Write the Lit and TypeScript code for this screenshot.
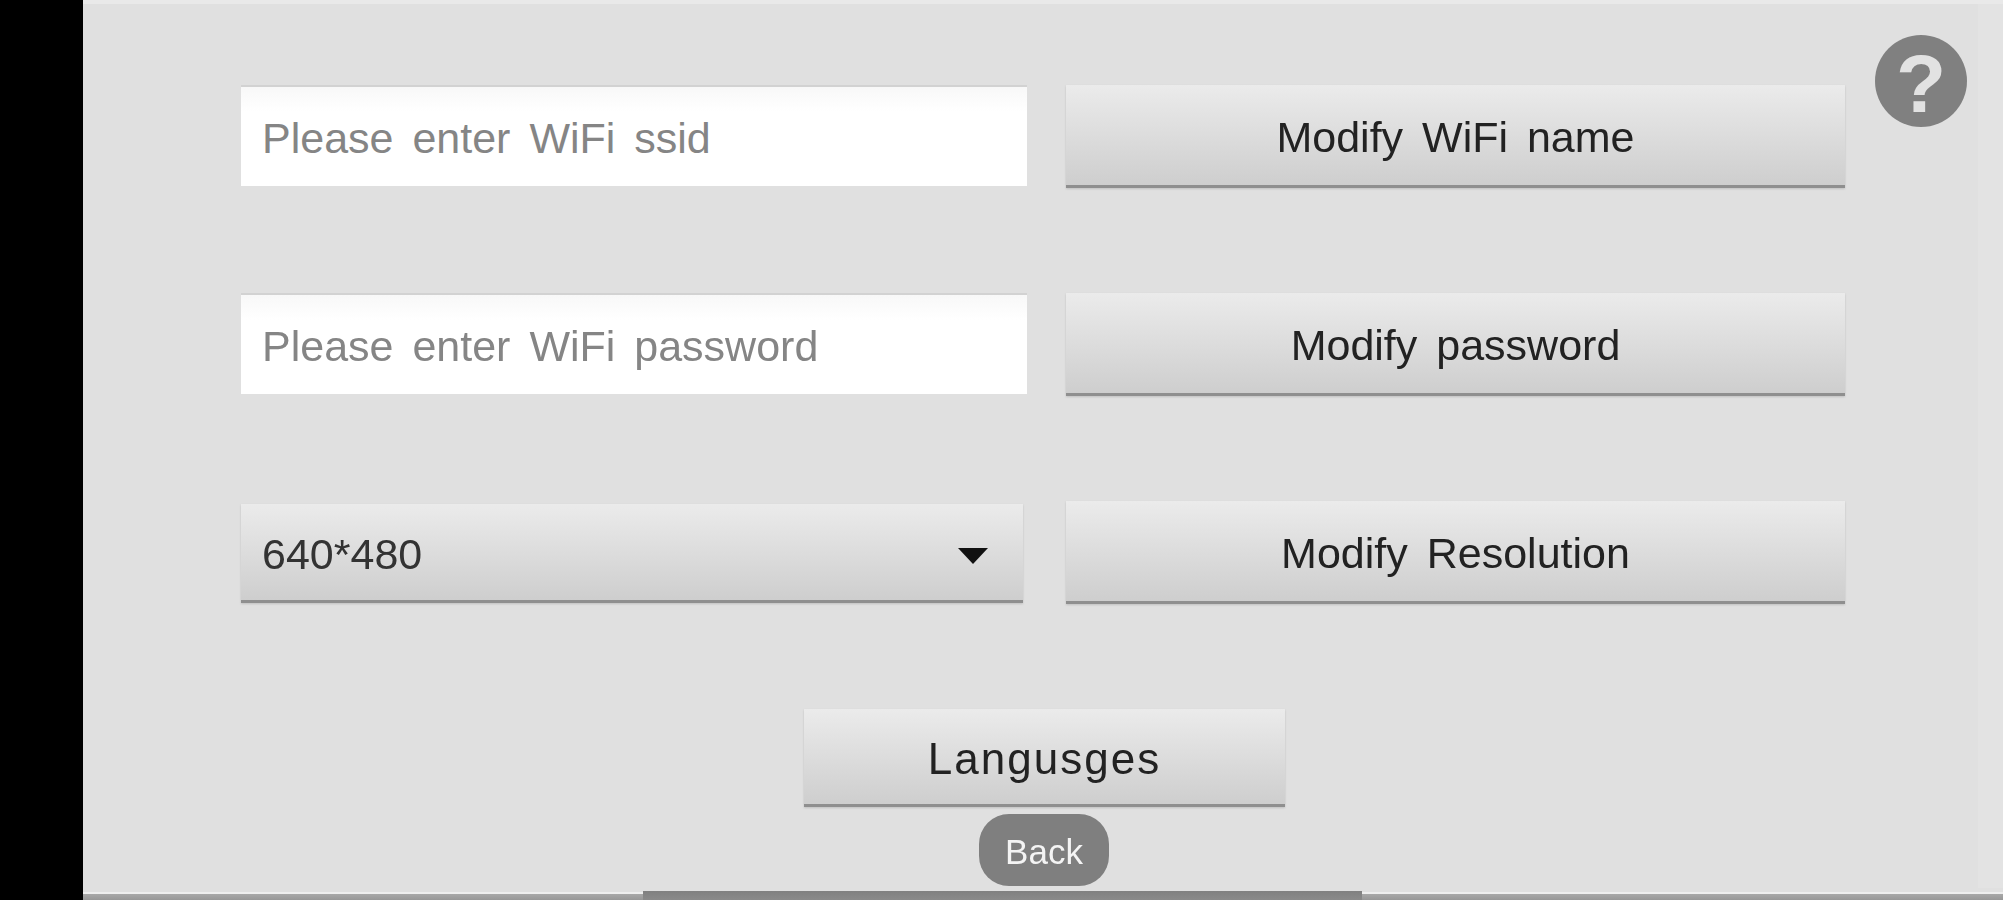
import {LitElement, css, html} from 'lit';
import {customElement} from 'lit/decorators.js';

@customElement('app-root')
export class AppRoot extends LitElement {
  static styles = css`
    :host {
      display: flex;
      width: 2003px;
      height: 900px;
      background: #000;
      font-family: 'Liberation Sans', Arial, sans-serif;
      overflow: hidden;
    }
    .panel {
      position: relative;
      flex: 1;
      margin-left: 83px;
      display: flex;
      flex-direction: column;
      background: linear-gradient(to right, #e0e0e0 1895px, #e3e3e3 1895px);
      border-top: 4px solid #e9e9e9;
    }
    .form {
      flex: 1;
      display: grid;
      grid-template-columns: 786px 779px;
      grid-auto-rows: 103px;
      column-gap: 39px;
      row-gap: 105px;
      padding: 81px 0 0 158px;
      filter: blur(0.6px);
    }
    .field {
      width: 100%;
      height: 101px;
      box-sizing: border-box;
      margin: 0;
      padding: 3px 21px 0;
      border: 0;
      border-top: 2px solid #d2d2d2;
      border-radius: 0;
      outline: none;
      background: linear-gradient(#f8f8f8, #fff 25%);
      font: inherit;
      font-size: 43px;
      word-spacing: 7px;
      color: #808080;
    }
    .field::placeholder {
      color: #858585;
      opacity: 1;
    }
    .btn {
      margin: 0;
      padding: 5px 0 0;
      border: 0;
      border-bottom: 3px solid #8f8f8f;
      background: linear-gradient(#ebebeb, #cecece);
      font: inherit;
      font-size: 43px;
      word-spacing: 7px;
      color: #222;
      box-shadow: 0 1px 2px rgba(0, 0, 0, 0.15);
    }
    .select {
      display: flex;
      align-items: center;
      justify-content: space-between;
      width: 782px;
      height: 99px;
      margin-top: 3px;
      padding: 5px 35px 0 21px;
      box-sizing: border-box;
      text-align: left;
      color: #333;
    }
    .caret {
      width: 0;
      height: 0;
      margin-top: 2px;
      border-left: 15px solid transparent;
      border-right: 15px solid transparent;
      border-top: 16px solid #111;
    }
    .lang-row {
      grid-column: 1 / -1;
      display: flex;
      justify-content: flex-start;
      padding-left: 563px;
    }
    .lang {
      width: 481px;
      height: 98px;
      font-size: 44px;
      letter-spacing: 2px;
    }
    .back-row {
      display: flex;
      justify-content: flex-start;
      padding-left: 896px;
      margin-bottom: 2px;
      filter: blur(0.6px);
    }
    .back {
      width: 130px;
      height: 72px;
      padding: 4px 0 0;
      border: 0;
      border-radius: 30px;
      background: #7f7f7f;
      color: #f4f4f4;
      font: inherit;
      font-size: 35px;
    }
    .bar {
      display: flex;
      height: 12px;
      background: linear-gradient(#e0e0e0 4px, #eeeeee 4px, #eeeeee 6px, #a8a8a8 6px, #979797);
    }
    .bar i {
      display: block;
      width: 719px;
      margin: 3px 0 0 560px;
      background: linear-gradient(#808080, #8a8a8a);
    }
    .help {
      position: absolute;
      top: 31px;
      right: 36px;
      width: 92px;
      height: 92px;
      padding: 0;
      border: 0;
      border-radius: 50%;
      background: #808080;
      color: #e2e2e2;
      font: inherit;
      font-size: 82px;
      font-weight: 700;
      line-height: 98px;
      filter: blur(0.6px);
    }
  `;

  render() {
    return html`
      <div class="panel">
        <button class="help">?</button>
        <div class="form">
          <input class="field" placeholder="Please enter WiFi ssid" />
          <button class="btn">Modify WiFi name</button>
          <input class="field" placeholder="Please enter WiFi password" />
          <button class="btn">Modify password</button>
          <button class="btn select">
            <span>640*480</span>
            <span class="caret"></span>
          </button>
          <button class="btn">Modify Resolution</button>
          <div class="lang-row">
            <button class="btn lang">Langusges</button>
          </div>
        </div>
        <div class="back-row"><button class="back">Back</button></div>
        <div class="bar"><i></i></div>
      </div>
    `;
  }
}
